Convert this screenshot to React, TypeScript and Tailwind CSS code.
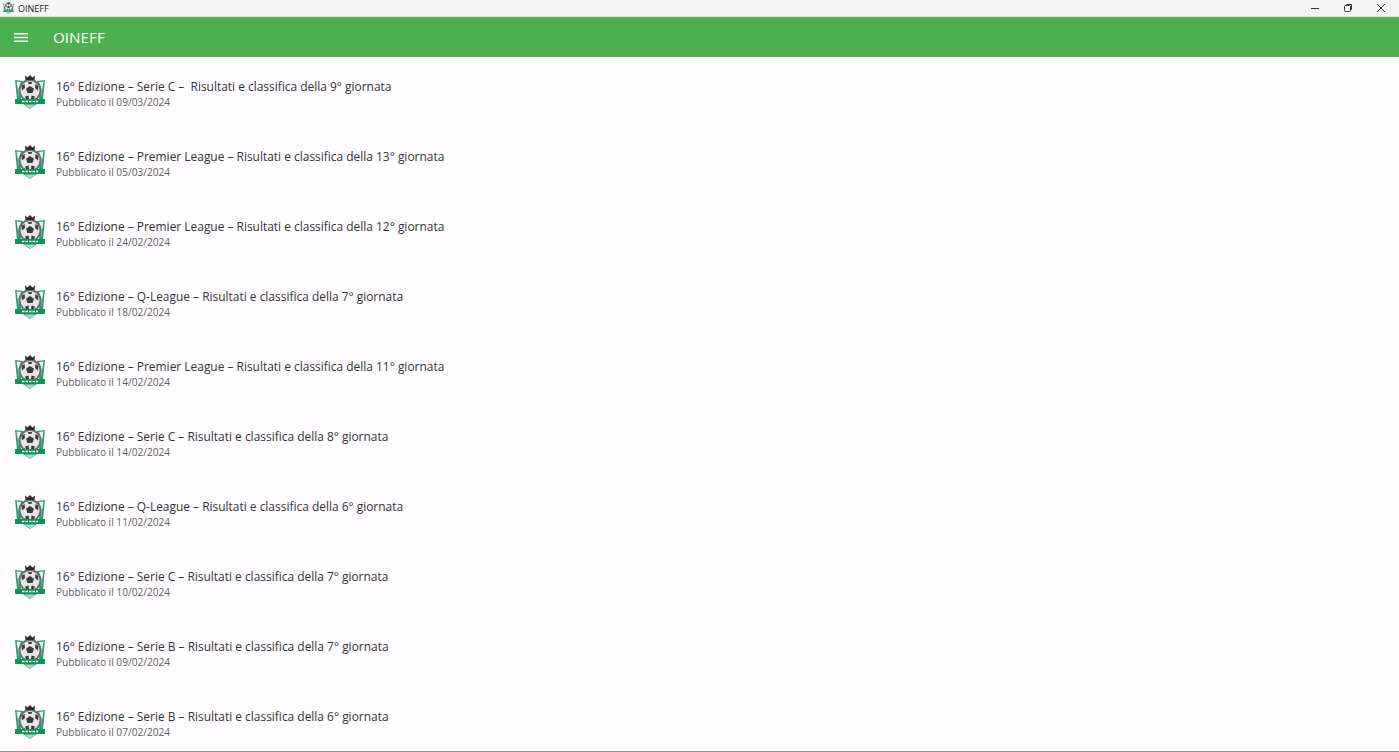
type Post = {
    title: string;
    date: string;
};

const posts: Post[] = [
    { title: "16° Edizione – Serie C –\u00a0 Risultati e classifica della 9° giornata", date: "09/03/2024" },
    { title: "16° Edizione – Premier League – Risultati e classifica della 13° giornata", date: "05/03/2024" },
    { title: "16° Edizione – Premier League – Risultati e classifica della 12° giornata", date: "24/02/2024" },
    { title: "16° Edizione – Q-League – Risultati e classifica della 7° giornata", date: "18/02/2024" },
    { title: "16° Edizione – Premier League – Risultati e classifica della 11° giornata", date: "14/02/2024" },
    { title: "16° Edizione – Serie C – Risultati e classifica della 8° giornata", date: "14/02/2024" },
    { title: "16° Edizione – Q-League – Risultati e classifica della 6° giornata", date: "11/02/2024" },
    { title: "16° Edizione – Serie C – Risultati e classifica della 7° giornata", date: "10/02/2024" },
    { title: "16° Edizione – Serie B – Risultati e classifica della 7° giornata", date: "09/02/2024" },
    { title: "16° Edizione – Serie B – Risultati e classifica della 6° giornata", date: "07/02/2024" },
];

function Logo({ size }: { size: number }) {
    return (
        <svg width={size} height={size * 1.06} viewBox="0 0 32 34" className="shrink-0">
            {/* shield wings */}
            <path d="M1 5 L9 6 L6 14 L7 25 L3 25 Z" fill="#2a9d70" />
            <path d="M31 5 L23 6 L26 14 L25 25 L29 25 Z" fill="#2a9d70" />
            <path d="M2.5 6.5 L7 7 L4.5 14 L5 22 Z" fill="#f0f8f4" />
            <path d="M29.5 6.5 L25 7 L27.5 14 L27 22 Z" fill="#f0f8f4" />
            {/* ball */}
            <circle cx="16" cy="15.5" r="11.5" fill="#6a6d6e" />
            <circle cx="16" cy="15.5" r="9.5" fill="#e6e6e6" />
            <path d="M16 11 L20 13.8 L18.5 18 L13.5 18 L12 13.8 Z" fill="#3a3a3a" />
            <path d="M7.5 11 L10.5 9 L11 13 L8 15.5 Z M24.5 11 L21.5 9 L21 13 L24 15.5 Z M11 21.5 L14.5 20.5 L15 24 L12 24 Z M21 21.5 L17.5 20.5 L17 24 L20 24 Z M14 7 L18 7 L17.5 9 L14.5 9 Z" fill="#3d3d3d" />
            {/* crown */}
            <path d="M11.5 5 L11 0.5 L13.5 2.5 L16 0 L18.5 2.5 L21 0.5 L20.5 5 Z" fill="#2b2b2b" />
            {/* ribbon */}
            <path d="M1 24 H31 V29 H23 L16 34 L9 29 H1 Z" fill="#0f9158" />
            <path d="M16 34 L10 29.5 H22 Z" fill="#a5d8bf" />
            <path d="M8 26.5 H24" stroke="#ffffff" strokeWidth="1.4" strokeDasharray="2.5 1" />
        </svg>
    );
}

function TitleBar() {
    return (
        <div className="flex h-[16px] shrink-0 items-center justify-between bg-[#f4f4f4]">
            <div className="flex items-center gap-[4px] pl-[3px]">
                <Logo size={11} />
                <span className="text-[9px] leading-none text-[#1a1a1a]">OINEFF</span>
            </div>
            <div className="flex items-center pr-[2px]">
                <div className="flex w-[33px] justify-center">
                    <svg width="10" height="10" viewBox="0 0 10 10">
                        <path d="M1 5.5 H9" stroke="#333" strokeWidth="1" />
                    </svg>
                </div>
                <div className="flex w-[33px] justify-center">
                    <svg width="10" height="10" viewBox="0 0 10 10" fill="none" stroke="#333" strokeWidth="1">
                        <rect x="1.5" y="2.5" width="6" height="6" rx="1" />
                        <path d="M3.5 2.5 V1.5 H8.5 V6.5 H7.5" />
                    </svg>
                </div>
                <div className="flex w-[33px] justify-center">
                    <svg width="10" height="10" viewBox="0 0 10 10">
                        <path d="M1 1 L9 9 M9 1 L1 9" stroke="#333" strokeWidth="1" />
                    </svg>
                </div>
            </div>
        </div>
    );
}

function PostRow({ title, date }: Post) {
    return (
        <li className="flex h-[70px] shrink-0 items-center gap-[10px] pl-[14px]">
            <Logo size={32} />
            <div className="flex flex-col pt-[5px]">
                <span className="text-[11.95px] leading-[16px] text-[#333333]">{title}</span>
                <span className="text-[10.15px] leading-[15px] text-[#5f5f5f]">Pubblicato il {date}</span>
            </div>
        </li>
    );
}

export default function App() {
    return (
        <div className="flex h-[752px] flex-col overflow-hidden border-b border-[#8a948a] bg-[#fefcff] font-['Open_Sans',sans-serif]">
            <TitleBar />
            <header className="flex h-[41px] shrink-0 items-center gap-[25px] border-t border-[#dfe5df] bg-[#4caf50] pl-[14px] pt-[1px]">
                <svg width="14" height="9" viewBox="0 0 14 9" stroke="#ffffff" strokeWidth="1.4">
                    <path d="M0 0.7 H14 M0 4.5 H14 M0 8.3 H14" />
                </svg>
                <span className="text-[15.25px] text-white">OINEFF</span>
            </header>
            <ul className="flex flex-col">
                {posts.map((post) => (
                    <PostRow key={post.title} title={post.title} date={post.date} />
                ))}
            </ul>
        </div>
    );
}
